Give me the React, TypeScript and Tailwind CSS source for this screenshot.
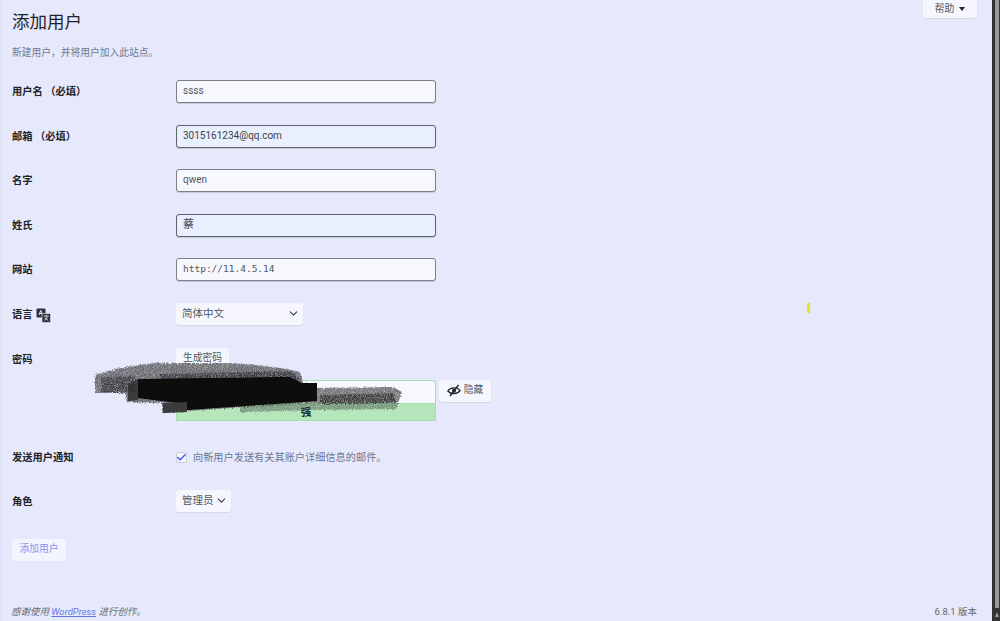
import { ChevronDown, Check } from "lucide-react";
import type { ReactNode } from "react";

const sans = "font-['Roboto','Noto_Sans_CJK_SC',sans-serif]";

function Row({ label, children, className = "" }: { label: ReactNode; children: ReactNode; className?: string }) {
  return (
    <div className={`flex items-start ${className}`}>
      <div className="w-[164px] shrink-0 text-[10.25px] font-bold text-[#1d2327] leading-[23px]">{label}</div>
      <div>{children}</div>
    </div>
  );
}

function TextInput({ value, filled, mono }: { value: ReactNode; filled?: boolean; mono?: boolean }) {
  return (
    <div
      className={`w-[260px] h-[23px] rounded-[3px] border px-[6px] leading-[20px] shadow-[0_1px_1px_rgba(0,0,0,0.15)] ${
        filled ? "bg-[#e8f0fe] border-[#5f626b] text-[#3c434a]" : "bg-[#f7f8fe] border-[#7c7f8a] text-[#50575e]"
      } ${mono ? "font-['DejaVu_Sans_Mono',monospace] text-[9.5px]" : "text-[10px]"}`}
    >
      {value}
    </div>
  );
}

function Scribble() {
  // the redaction scrawl drawn over the password field
  return (
    <svg className="absolute left-0 top-0 pointer-events-none" width="1000" height="621" viewBox="0 0 1000 621">
      <defs>
        <filter id="grain" x="-5%" y="-20%" width="110%" height="140%">
          <feTurbulence type="fractalNoise" baseFrequency="1.1" numOctaves="2" seed="4" result="noise" />
          <feDisplacementMap in="SourceGraphic" in2="noise" scale="4" result="rough" />
          <feColorMatrix in="noise" type="matrix" values="0 0 0 0 0  0 0 0 0 0  0 0 0 0 0  0 0 0 -1.2 1.45" result="speck" />
          <feComposite in="rough" in2="speck" operator="in" result="grainy" />
          <feGaussianBlur in="grainy" stdDeviation="0.45" />
        </filter>
        <filter id="soft" x="-5%" y="-20%" width="110%" height="140%">
          <feGaussianBlur stdDeviation="0.7" />
        </filter>
      </defs>
      <g filter="url(#grain)">
        <path
          d="M95 375 C115 368 135 365 157 363 L230 363 C260 365 285 368 300 372 L303 383 L317 383 L317 402 L187 411 L162 413 L162 403 L127 402 L125 393 L95 393 Z"
          fill="#5a5a5c"
          fillOpacity="0.9"
        />
        <path d="M313 388 L393 387 L402 392 L398 403 L240 403 Z" fill="#5a5a5c" fillOpacity="0.85" />
        <path d="M240 403 L398 403 L396 409 L313 410 L240 412 Z" fill="#3f4a42" fillOpacity="0.5" />
        <path d="M101 377 L135 376 L135 392 L101 392 Z" fill="#1c1c1e" fillOpacity="0.55" />
        <path d="M160 374 L292 371 L300 380 L160 382 Z" fill="#1c1c1e" fillOpacity="0.65" />
        <path d="M320 395 L393 393 L396 403 L320 404 Z" fill="#111113" fillOpacity="0.6" />
      </g>
      <g filter="url(#soft)">
        <path d="M128 385 L138 379 L138 400 L128 401 Z" fill="#2a2a2c" fillOpacity="0.8" />
        <path d="M138 379 L290 377 L302 383 L317 383 L317 401 L187 410 L177 403 L138 398 Z" fill="#070707" />
        <path d="M163 403 L187 402 L187 412 L163 413 Z" fill="#3a3a3c" />
      </g>
    </svg>
  );
}

export default function App() {
  return (
    <div className={`relative h-[621px] w-[1000px] overflow-hidden flex bg-[#e6e9fb] ${sans}`}>
      <main className="flex-1 border-l-2 border-[#dfe2f4] pl-[10px] pr-[15px] relative">
        <div className="flex justify-end">
          <button className="h-[18px] w-[54px] rounded-b-[3px] bg-[#f6f7fe] text-[9.75px] text-[#50575e] shadow-[0_1px_1px_rgba(0,0,0,0.08)] flex items-center justify-center gap-[5px]">
            帮助
            <span className="border-x-[3px] border-t-[4px] border-x-transparent border-t-[#1d2327]" />
          </button>
        </div>

        <h1 className="text-[17.5px] leading-[24px] text-[#1d2327] -mt-[8px]">添加用户</h1>
        <p className="mt-[11px] text-[9.75px] leading-[16px] text-[#70778a]">新建用户，并将用户加入此站点。</p>

        <div className="mt-[19px] flex flex-col gap-[21.6px]">
          <Row label="用户名 （必填）">
            <TextInput value="ssss" />
          </Row>
          <Row label="邮箱 （必填）">
            <TextInput value="3015161234@qq.com" filled />
          </Row>
          <Row label="名字">
            <TextInput value="qwen" />
          </Row>
          <Row label="姓氏">
            <TextInput value={<span className="text-[11px]">蔡</span>} filled />
          </Row>
          <Row label="网站">
            <TextInput value="http://11.4.5.14" mono />
          </Row>
          <Row
            label={
              <span className="flex items-center gap-[3px]">
                语言
                <svg width="15" height="15" viewBox="0 0 15 15" className="mt-[2px]">
                  <rect x="0.5" y="0.5" width="9" height="9" rx="1" fill="#2c3338" />
                  <path d="M3 7l1.8-4.6L6.6 7M3.7 5.6h2.2" stroke="#e6e9fb" strokeWidth="1" fill="none" />
                  <rect x="6" y="5.5" width="8.5" height="9" rx="1" fill="#2c3338" stroke="#e6e9fb" strokeWidth="0.6" />
                  <path d="M8 8h4.5M10.2 7v1M8.5 12.5l3.5-4M8.8 9.5l3.4 3" stroke="#e6e9fb" strokeWidth="0.9" fill="none" />
                </svg>
              </span>
            }
          >
            <div className="w-[127px] h-[22px] rounded-[3px] bg-[#f6f7fe] shadow-[0_1px_1px_rgba(0,0,0,0.08)] pl-[6px] pr-[3px] flex items-center justify-between text-[10.5px] text-[#50575e]">
              简体中文
              <ChevronDown size={13} strokeWidth={2.2} className="text-[#3c434a]" />
            </div>
          </Row>
          <Row label="密码">
            <button className="block h-[22px] w-[53px] rounded-[3px] bg-[#f6f7fe] text-[9.75px] text-[#50575e] shadow-[0_1px_1px_rgba(0,0,0,0.08)]">
              生成密码
            </button>
            <div className="mt-[10px] flex items-start gap-[3px]">
              <div className="w-[260px]">
                <div className="h-[23px] rounded-t-[3px] border border-b-0 border-[#a5dfae] bg-[#f7f8fe]" />
                <div className="h-[18px] border border-[#a5dfae] bg-[#b5e6bc] text-center text-[10.5px] font-bold leading-[18px] text-[#1d2327]">
                  强
                </div>
              </div>
              <button className="h-[22px] w-[52px] rounded-[3px] bg-[#f6f7fe] shadow-[0_1px_1px_rgba(0,0,0,0.08)] flex items-center justify-center gap-[3px] text-[9.75px] text-[#50575e]">
                <svg width="14" height="13" viewBox="0 0 14 13" fill="none" stroke="#1d2327">
                  <path d="M0.8 7 C3.5 3.2 10 2.8 13.2 6.4 C10.5 10.4 4 10.8 0.8 7 Z" strokeWidth="1.2" />
                  <circle cx="7" cy="6.7" r="2" fill="#1d2327" stroke="none" />
                  <path d="M3 12 L11.5 1" strokeWidth="1.4" />
                </svg>
                隐藏
              </button>
            </div>
          </Row>
          <Row label="发送用户通知" className="mt-[4px]">
            <div className="flex items-center gap-[6px] h-[23px]">
              <span className="size-[11px] rounded-[2px] border border-[#c9ccd8] bg-[#f7f8fe] flex items-center justify-center">
                <Check size={11} strokeWidth={3.5} className="text-[#4a5ef5] shrink-0" />
              </span>
              <span className="text-[10.2px] text-[#6d7796]">向新用户发送有关其账户详细信息的邮件。</span>
            </div>
          </Row>
          <Row label="角色" className="-mt-[1px]">
            <div className="w-[55px] h-[22px] rounded-[3px] bg-[#f6f7fe] shadow-[0_1px_1px_rgba(0,0,0,0.08)] pl-[6px] pr-[3px] flex items-center justify-between text-[10.5px] text-[#50575e]">
              管理员
              <ChevronDown size={13} strokeWidth={2.2} className="text-[#3c434a]" />
            </div>
          </Row>
        </div>

        <button className="mt-[26px] block h-[22px] w-[54px] rounded-[3px] bg-[#f3f5fe] text-[9.75px] text-[#8a93ee]">
          添加用户
        </button>

        <footer className="absolute bottom-[2px] left-[9px] right-[15px] flex justify-between text-[9.5px] leading-[14px] text-[#646970]">
          <span className="italic">
            感谢使用 <span className="text-[#6a76e8] underline">WordPress</span> 进行创作。
          </span>
          <span>6.8.1 版本</span>
        </footer>
      </main>

      {/* scrollbar */}
      <div className="w-[8px] h-full shrink-0 bg-[#333335] pl-[3px] pr-[1px] flex flex-col items-center">
        <div className="w-full h-[608px] bg-[#9a9a9c]" />
        <span className="mt-[4px] border-x-[2px] border-b-[5px] border-x-transparent border-b-[#9a9a9c]" />
      </div>

      <div className="absolute left-[807px] top-[303px] h-[10px] w-[3px] bg-[#ebe313]" />
      <Scribble />
    </div>
  );
}
